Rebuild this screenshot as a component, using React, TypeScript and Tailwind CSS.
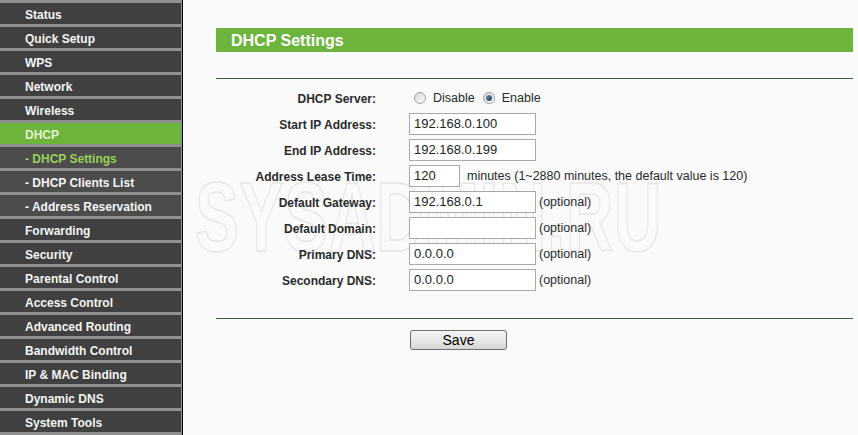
import React from 'react';

// menu on the left
const menu = [
  { label: 'Status' },
  { label: 'Quick Setup' },
  { label: 'WPS' },
  { label: 'Network' },
  { label: 'Wireless' },
  { label: 'DHCP', active: true },
  { label: '- DHCP Settings', sub: true, current: true },
  { label: '- DHCP Clients List', sub: true },
  { label: '- Address Reservation', sub: true },
  { label: 'Forwarding' },
  { label: 'Security' },
  { label: 'Parental Control' },
  { label: 'Access Control' },
  { label: 'Advanced Routing' },
  { label: 'Bandwidth Control' },
  { label: 'IP & MAC Binding' },
  { label: 'Dynamic DNS' },
  { label: 'System Tools' },
];

type Item = { label: string; active?: boolean; sub?: boolean; current?: boolean };

const MenuItem = ({ item }: { item: Item }) => {
  let cls = 'bg-[#404040] text-[#f4f4f4]';
  if (item.active) cls = 'bg-[#6cb43c] text-[#e4f2d2]';
  else if (item.sub) cls = item.current ? 'bg-[#4c4c4c] text-[#9bd05a]' : 'bg-[#4c4c4c] text-[#f4f4f4]';
  return (
    <div className={`h-[24px] shrink-0 overflow-hidden border-t-[3px] border-r border-[#8f8f8f] pl-[25px] text-[12px] font-bold leading-[24px] whitespace-nowrap ${cls}`}>
      {item.label}
    </div>
  );
};

const Radio = ({ checked }: { checked?: boolean }) => (
  <span className="flex h-[12px] w-[12px] items-center justify-center rounded-full border border-[#a3a3a3] bg-gradient-to-br from-[#d9d9d9] to-[#fbfbfb]">
    {checked && <span className="h-[6px] w-[6px] rounded-full bg-gradient-to-br from-[#6d93b8] to-[#1f3f5e]" />}
  </span>
);

const TextBox = ({ value, w = 'w-[127px]' }: { value: string; w?: string }) => (
  <div className={`${w} h-[22px] shrink-0 border border-[#a9a9a9] bg-white pl-[4px] text-[13px] leading-[20px] text-[#222]`}>{value}</div>
);

const Row = ({ label, children }: { label: string; children: React.ReactNode }) => (
  <div className="flex h-[26px] items-center">
    <div className="w-[160px] shrink-0 pt-px text-right text-[12px] font-bold text-[#2a2a2a]">{label}</div>
    <div className="ml-[33px] flex items-center text-[12px] text-[#2a2a2a]">{children}</div>
  </div>
);

const Optional = () => <span className="ml-[3px] text-[12.5px]">(optional)</span>;

export default function App() {
  return (
    <div className="relative flex h-[435px] w-[858px] overflow-hidden bg-[#fafafa] font-['Liberation_Sans',Arial,sans-serif]">
      {/* watermark, sits behind the form */}
      <div aria-hidden className="pointer-events-none absolute left-[195px] top-[168px] origin-left scale-x-[0.67] text-[98px] font-bold leading-none tracking-[1px] whitespace-nowrap text-transparent [-webkit-text-stroke:1.5px_#e6e6e6]">
        SYSADMIN.RU
      </div>

      <aside className="relative z-10 flex w-[183px] shrink-0 flex-col border-r border-black bg-[#8f8f8f]">
        {menu.map((m) => (
          <MenuItem key={m.label} item={m} />
        ))}
      </aside>

      <main className="relative z-10 flex-1 pl-[33px] pr-[5px]">
        <div className="mt-[28px] h-[24px] bg-[#6cb43c] pl-[15px] text-[16px] font-bold leading-[25px] text-white">DHCP Settings</div>
        <div className="mt-[26px] h-px bg-[#35613f]" />

        <div className="mt-[6px] flex flex-col">
          <Row label="DHCP Server:">
            <span className="ml-[5px]"><Radio /></span>
            <span className="ml-[7px] text-[12.5px]">Disable</span>
            <span className="ml-[8px]"><Radio checked /></span>
            <span className="ml-[7px] text-[12.5px]">Enable</span>
          </Row>
          <Row label="Start IP Address:"><TextBox value="192.168.0.100" /></Row>
          <Row label="End IP Address:"><TextBox value="192.168.0.199" /></Row>
          <Row label="Address Lease Time:">
            <TextBox value="120" w="w-[51px]" />
            <span className="ml-[7px] text-[12.5px]">minutes (1~2880 minutes, the default value is 120)</span>
          </Row>
          <Row label="Default Gateway:"><TextBox value="192.168.0.1" /><Optional /></Row>
          <Row label="Default Domain:"><TextBox value="" /><Optional /></Row>
          <Row label="Primary DNS:"><TextBox value="0.0.0.0" /><Optional /></Row>
          <Row label="Secondary DNS:"><TextBox value="0.0.0.0" /><Optional /></Row>
        </div>

        <div className="mt-[25px] h-px bg-[#35613f]" />
        <div className="mt-[9px] pl-[194px]">
          <button className="h-[20px] w-[97px] rounded-[3px] border border-[#707070] bg-gradient-to-b from-[#f4f4f4] via-[#e8e8e8] to-[#d6d6d6] text-[14px] leading-[18px] text-black">
            Save
          </button>
        </div>
      </main>
    </div>
  );
}
